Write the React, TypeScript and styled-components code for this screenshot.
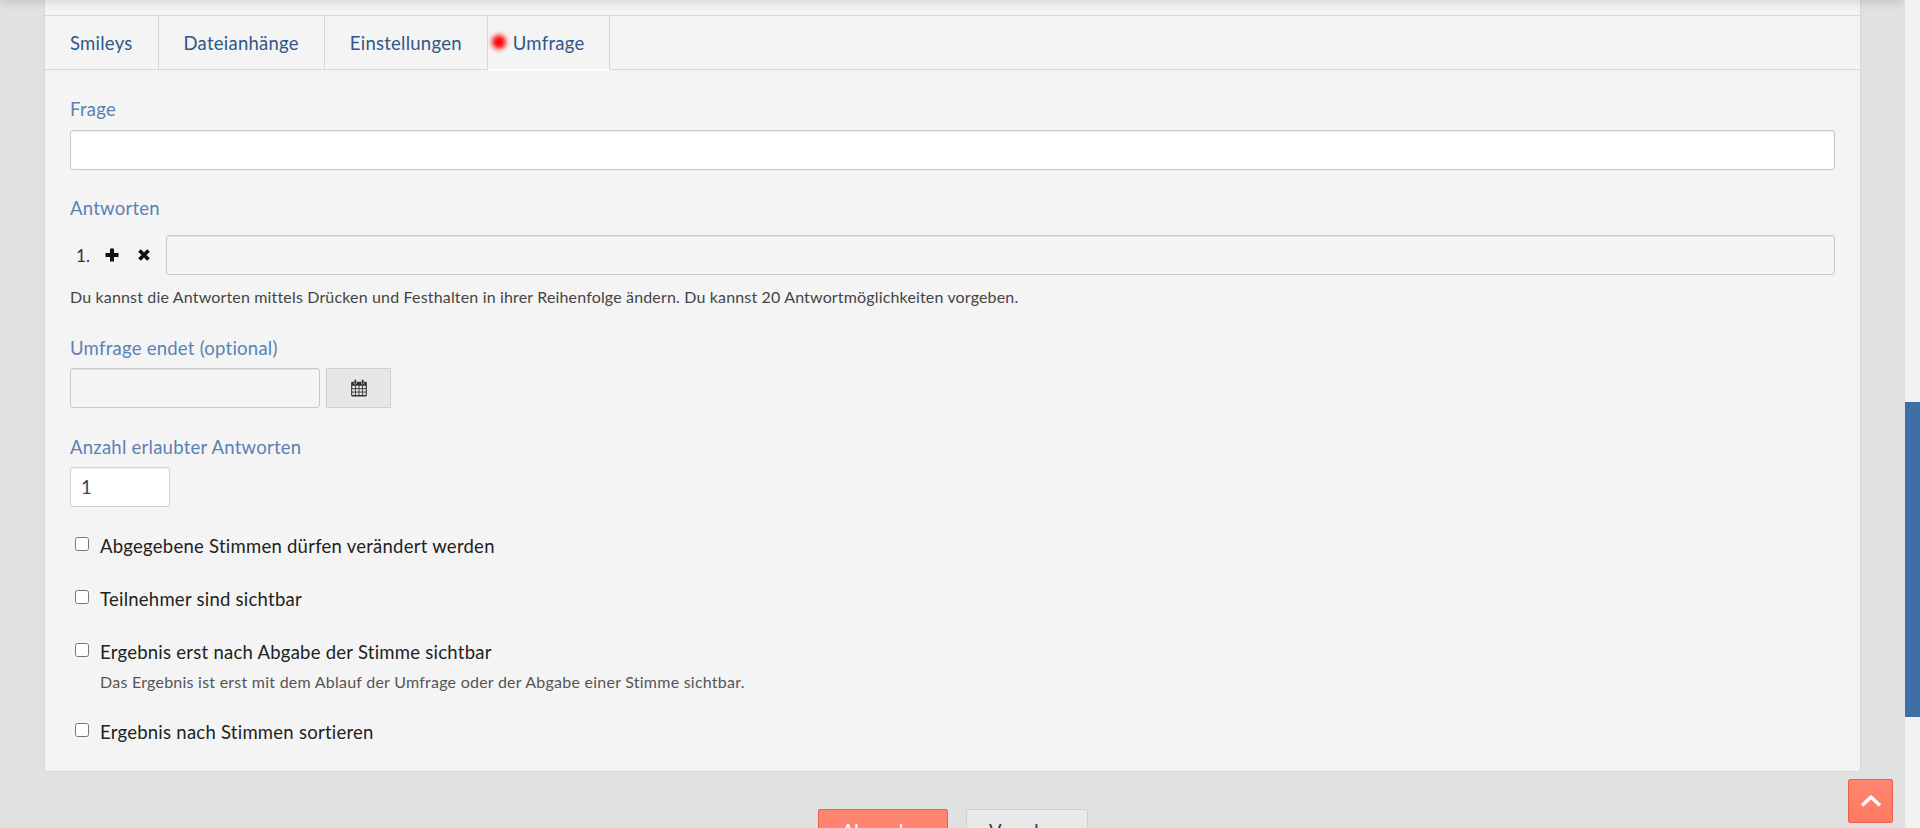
import React from "react";
import styled, { createGlobalStyle } from "styled-components";

const tabs = ["Smileys", "Dateianhänge", "Einstellungen", "Umfrage"];

const GlobalStyle = createGlobalStyle`
  html, body {
    margin: 0;
    height: 100%;
    overflow: hidden;
  }
  body {
    font-family: Lato, "Liberation Sans", sans-serif;
    font-size: 18.5px;
    letter-spacing: 0.25px;
    color: #222;
  }
  * {
    box-sizing: border-box;
  }
`;

const PlusIcon = () => (
  <svg width="14" height="14" viewBox="0 0 14 14" aria-hidden="true">
    <path d="M7 .5v13M.5 7h13" fill="none" stroke="#111" strokeWidth="4" />
  </svg>
);

const CrossIcon = () => (
  <svg width="14" height="14" viewBox="0 0 14 14" aria-hidden="true">
    <path d="M2.5 2.5l9 9M11.5 2.5l-9 9" fill="none" stroke="#111" strokeWidth="3.6" />
  </svg>
);

const CalendarIcon = () => (
  <svg width="18" height="18" viewBox="0 0 16 16" aria-hidden="true">
    <rect x="1" y="2.5" width="14" height="13" rx="1" fill="#333" />
    <g fill="#e8e8e8">
      <rect x="2" y="6" width="2.4" height="2.2" />
      <rect x="5.2" y="6" width="2.4" height="2.2" />
      <rect x="8.4" y="6" width="2.4" height="2.2" />
      <rect x="11.6" y="6" width="2.4" height="2.2" />
      <rect x="2" y="9" width="2.4" height="2.2" />
      <rect x="5.2" y="9" width="2.4" height="2.2" />
      <rect x="8.4" y="9" width="2.4" height="2.2" />
      <rect x="11.6" y="9" width="2.4" height="2.2" />
      <rect x="2" y="12" width="2.4" height="2.2" />
      <rect x="5.2" y="12" width="2.4" height="2.2" />
      <rect x="8.4" y="12" width="2.4" height="2.2" />
      <rect x="11.6" y="12" width="2.4" height="2.2" />
    </g>
    <rect x="3.6" y="0.5" width="2.2" height="4" rx="1" fill="#333" stroke="#e8e8e8" strokeWidth="0.5" />
    <rect x="10.2" y="0.5" width="2.2" height="4" rx="1" fill="#333" stroke="#e8e8e8" strokeWidth="0.5" />
  </svg>
);

const App: React.FC = () => {
  return (
    <Shell>
      <GlobalStyle />
      <Page>
        <TopBar />
        <Card>
          <TabBar>
            {tabs.map((tab) => (
              <Tab key={tab} $active={tab === "Umfrage"}>
                {tab === "Umfrage" && <Dot />}
                {tab}
              </Tab>
            ))}
          </TabBar>
          <Content>
            <Group>
              <Label>Frage</Label>
              <TextInput />
            </Group>

            <Group>
              <Label>Antworten</Label>
              <AnswerRow>
                <AnswerNumber>1.</AnswerNumber>
                <IconButton>
                  <PlusIcon />
                </IconButton>
                <IconButton>
                  <CrossIcon />
                </IconButton>
                <TextInput $muted />
              </AnswerRow>
              <Hint>
                Du kannst die Antworten mittels Drücken und Festhalten in ihrer
                Reihenfolge ändern. Du kannst 20 Antwortmöglichkeiten vorgeben.
              </Hint>
            </Group>

            <Group>
              <Label>Umfrage endet (optional)</Label>
              <DateRow>
                <DateInput />
                <DateButton>
                  <CalendarIcon />
                </DateButton>
              </DateRow>
            </Group>

            <Group>
              <Label>Anzahl erlaubter Antworten</Label>
              <NumberInput defaultValue="1" />
            </Group>

            <CheckList>
              <CheckRow>
                <CheckBox type="checkbox" />
                <CheckText>Abgegebene Stimmen dürfen verändert werden</CheckText>
              </CheckRow>
              <CheckRow>
                <CheckBox type="checkbox" />
                <CheckText>Teilnehmer sind sichtbar</CheckText>
              </CheckRow>
              <CheckRow>
                <CheckBox type="checkbox" />
                <div>
                  <CheckText>Ergebnis erst nach Abgabe der Stimme sichtbar</CheckText>
                  <CheckHint>
                    Das Ergebnis ist erst mit dem Ablauf der Umfrage oder der
                    Abgabe einer Stimme sichtbar.
                  </CheckHint>
                </div>
              </CheckRow>
              <CheckRow>
                <CheckBox type="checkbox" />
                <CheckText>Ergebnis nach Stimmen sortieren</CheckText>
              </CheckRow>
            </CheckList>
          </Content>
        </Card>
        <FormActions>
          <SubmitButton>Absenden</SubmitButton>
          <PreviewButton>Vorschau</PreviewButton>
        </FormActions>
      </Page>
      <Scrollbar>
        <ScrollThumb />
      </Scrollbar>
      <ToTop>
        <svg width="24" height="16" viewBox="0 0 24 16" aria-hidden="true">
          <path d="M3 12.5 12 4l9 8.5" fill="none" stroke="#fff" strokeWidth="3.4" />
        </svg>
      </ToTop>
    </Shell>
  );
};

export default App;

const Shell = styled.div`
  display: flex;
  height: 828px;
  overflow: hidden;
`;

const Page = styled.div`
  position: relative;
  flex: 1;
  min-width: 0;
  background: #e1e1e1;
  padding: 0 44px;
  overflow: hidden;
`;

const TopBar = styled.div`
  position: absolute;
  top: -10px;
  left: 0;
  right: 0;
  height: 10px;
  box-shadow: 0 0 12px rgba(0, 0, 0, 0.2);
`;

const Card = styled.div`
  height: 772px;
  padding-top: 15px;
  background: #f4f4f4;
  border: 1px solid #d8d8d8;
  border-top: 0;
  border-radius: 0 0 3px 3px;
`;

const TabBar = styled.div`
  display: flex;
  height: 55px;
  border-top: 1px solid #d8d8d8;
  border-bottom: 1px solid #d8d8d8;
`;

const Tab = styled.div<{ $active?: boolean }>`
  position: relative;
  display: flex;
  align-items: center;
  height: 55px;
  margin-top: -1px;
  padding: 0 25px;
  border-top: 1px solid #d8d8d8;
  border-right: 1px solid #d8d8d8;
  border-bottom: 1px solid ${(p) => (p.$active ? "#fff" : "#d8d8d8")};
  color: #2f5788;
`;

const Dot = styled.span`
  position: absolute;
  left: 4px;
  top: 19px;
  width: 14px;
  height: 14px;
  border-radius: 50%;
  background: #ff0000;
  filter: blur(2.5px);
`;

const Content = styled.div`
  padding: 28px 25px 0;
`;

const Group = styled.div`
  margin-bottom: 27px;
`;

const Label = styled.div`
  height: 24px;
  line-height: 22px;
  margin-bottom: 8px;
  color: #5a82b4;
`;

const TextInput = styled.input<{ $muted?: boolean }>`
  display: block;
  flex: 1;
  width: 100%;
  height: 40px;
  border: 1px solid #c9c9c9;
  border-radius: 3px;
  background: ${(p) => (p.$muted ? "#f5f5f5" : "#fff")};
  box-shadow: inset 0 1px 1px rgba(0, 0, 0, 0.075);
`;

const AnswerRow = styled.div`
  display: flex;
  align-items: center;
  height: 40px;
  margin-top: 14px;
`;

const AnswerNumber = styled.span`
  width: 26px;
  padding-left: 6px;
  font-size: 17px;
  color: #333;
`;

const IconButton = styled.span`
  display: flex;
  justify-content: center;
  width: 32px;
  color: #111;
  & + input {
    margin-left: 6px;
  }
`;

const Hint = styled.div`
  margin-top: 12px;
  margin-bottom: 30px;
  font-size: 16px;
  letter-spacing: 0.16px;
  line-height: 20px;
  color: #444;
`;

const DateRow = styled.div`
  display: flex;
  gap: 6px;
  margin-top: -1px;
  padding-bottom: 1px;
`;

const DateInput = styled.input`
  width: 250px;
  height: 40px;
  border: 1px solid #c9c9c9;
  border-radius: 3px;
  background: #f5f5f5;
  box-shadow: inset 0 1px 1px rgba(0, 0, 0, 0.075);
`;

const DateButton = styled.button`
  display: flex;
  align-items: center;
  justify-content: center;
  width: 65px;
  height: 40px;
  padding: 0;
  border: 1px solid #cfcfcf;
  background: #e7e7e7;
`;

const NumberInput = styled.input`
  display: block;
  width: 100px;
  height: 40px;
  margin-top: -1px;
  padding: 0 10px;
  border: 1px solid #d2d2d2;
  border-radius: 3px;
  background: #fff;
  color: #444;
  font-family: inherit;
  font-size: 18.5px;
  box-shadow: inset 0 1px 1px rgba(0, 0, 0, 0.075);
`;

const CheckList = styled.div`
  display: flex;
  flex-direction: column;
`;

const CheckRow = styled.label`
  display: flex;
  align-items: flex-start;
  gap: 11px;
  padding-left: 5px;
  margin-bottom: 29px;
`;

const CheckBox = styled.input`
  width: 14px;
  height: 14px;
  margin: 3px 0 0;
`;

const CheckText = styled.div`
  line-height: 24px;
  color: #222;
`;

const CheckHint = styled.div`
  margin-top: 9px;
  font-size: 16px;
  letter-spacing: 0.24px;
  line-height: 18px;
  color: #555;
`;

const FormActions = styled.div`
  display: flex;
  justify-content: center;
  gap: 18px;
  margin-top: 37px;
`;

const SubmitButton = styled.button`
  width: 130px;
  height: 44px;
  border: 1px solid #e8604a;
  border-radius: 2px;
  background: #ff8570;
  color: #fff;
  font-family: inherit;
  font-size: 18.5px;
`;

const PreviewButton = styled.button`
  width: 122px;
  height: 44px;
  border: 1px solid #cfcfcf;
  border-radius: 2px;
  background: #e9e9e9;
  color: #333;
  font-family: inherit;
  font-size: 18.5px;
`;

const Scrollbar = styled.div`
  flex: none;
  width: 15px;
  padding-top: 402px;
  background: #f1f1f1;
`;

const ScrollThumb = styled.div`
  height: 315px;
  background: #3e6ea6;
`;

const ToTop = styled.button`
  position: fixed;
  right: 27px;
  bottom: 5px;
  display: flex;
  align-items: center;
  justify-content: center;
  width: 45px;
  height: 44px;
  padding: 0;
  border: 1px solid #e8604a;
  border-radius: 2px;
  background: linear-gradient(#ff8570, #ff7a60);
`;
